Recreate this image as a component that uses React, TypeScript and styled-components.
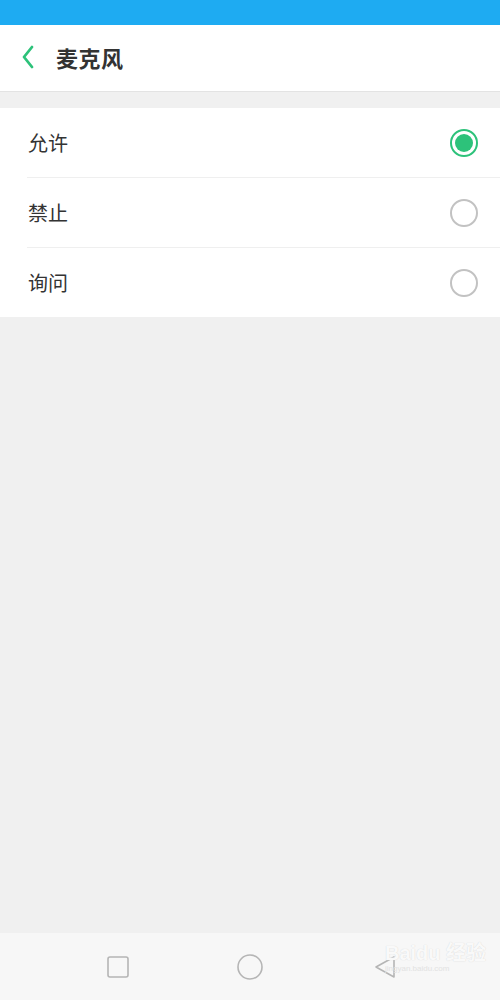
import styled, { createGlobalStyle } from "styled-components"

const GlobalStyle = createGlobalStyle`
  html, body {
    margin: 0;
    padding: 0;
    background: #f0f0f0;
  }
  * {
    box-sizing: border-box;
  }
`

const options = [
  { label: "允许", checked: true },
  { label: "禁止", checked: false },
  { label: "询问", checked: false },
]

export default function App() {
  return (
    <>
      <GlobalStyle />
      <Page>
        <StatusBar />
        <Header>
          <BackButton>
            <svg width="14" height="24" viewBox="0 0 14 24">
              <path
                d="M11 2 L3 12 L11 22"
                fill="none"
                stroke="#2dc27a"
                strokeWidth="2.8"
                strokeLinecap="round"
                strokeLinejoin="round"
              />
            </svg>
          </BackButton>
          <Title>麦克风</Title>
        </Header>
        <List>
          {options.map((option, i) => (
            <Row key={option.label} $last={i === options.length - 1}>
              <Label>{option.label}</Label>
              <Radio $checked={option.checked} />
            </Row>
          ))}
        </List>
        <Spacer />
        <NavBar>
          <NavSlot $width={132}>
            <svg width="22" height="22" viewBox="0 0 22 22">
              <rect x="1" y="1" width="20" height="20" rx="2" fill="none" stroke="#b5b5b5" strokeWidth="1.6" />
            </svg>
          </NavSlot>
          <NavSlot $width={132}>
            <svg width="26" height="26" viewBox="0 0 26 26">
              <circle cx="13" cy="13" r="12" fill="none" stroke="#b5b5b5" strokeWidth="1.6" />
            </svg>
          </NavSlot>
          <NavSlot $width={138}>
            <svg width="24" height="24" viewBox="0 0 24 24">
              <path
                d="M3 12 L21 2 L21 22 Z"
                fill="none"
                stroke="#b5b5b5"
                strokeWidth="1.6"
                strokeLinejoin="round"
              />
            </svg>
            <Watermark>
              Baidu 经验
              <small>jingyan.baidu.com</small>
            </Watermark>
          </NavSlot>
        </NavBar>
      </Page>
    </>
  )
}

const Page = styled.div`
  display: flex;
  flex-direction: column;
  width: 500px;
  height: 1000px;
  background: #f0f0f0;
  font-family: "Noto Sans CJK SC", "Noto Sans", sans-serif;
`

const StatusBar = styled.div`
  height: 25px;
  background: #1eabf2;
`

const Header = styled.div`
  display: flex;
  align-items: center;
  height: 67px;
  padding: 0 0 2px 21px;
  background: #ffffff;
  border-bottom: 1px solid #e3e3e3;
`

const BackButton = styled.div`
  display: flex;
  align-items: center;
  width: 35px;
`

const Title = styled.div`
  font-size: 22px;
  font-weight: 700;
  color: #333333;
  letter-spacing: 0.5px;
`

const List = styled.div`
  margin-top: 16px;
  background: #ffffff;
  padding-left: 27px;
`

const Row = styled.div<{ $last: boolean }>`
  display: flex;
  align-items: center;
  justify-content: space-between;
  height: ${({ $last }) => ($last ? "69px" : "70px")};
  padding-right: 22px;
  border-bottom: ${({ $last }) => ($last ? "none" : "1px solid #efefef")};
`

const Label = styled.div`
  font-size: 20px;
  color: #333333;
  padding-left: 1px;
`

const Radio = styled.div<{ $checked: boolean }>`
  width: 28px;
  height: 28px;
  border-radius: 50%;
  border: 2px solid ${({ $checked }) => ($checked ? "#2dc27a" : "#c2c2c2")};
  padding: 3px;
  background-clip: content-box;
  background-color: ${({ $checked }) => ($checked ? "#2dc27a" : "transparent")};
`

const Spacer = styled.div`
  flex: 1;
`

const NavBar = styled.div`
  display: flex;
  align-items: center;
  height: 67px;
  padding-left: 52px;
  background: #f7f7f7;
`

const NavSlot = styled.div<{ $width: number }>`
  position: relative;
  display: flex;
  align-items: center;
  justify-content: center;
  width: ${({ $width }) => $width}px;
  height: 100%;
`

const Watermark = styled.div`
  position: absolute;
  left: 69px;
  top: 10px;
  display: flex;
  flex-direction: column;
  font-family: "Liberation Sans", "Noto Sans CJK SC", sans-serif;
  font-size: 20px;
  font-weight: 700;
  color: rgba(255, 255, 255, 0.9);
  text-shadow: 0 0 1px #cfcfcf;
  white-space: nowrap;
  line-height: 20px;

  small {
    font-size: 8px;
    font-weight: 400;
    line-height: 12px;
    color: #e2e2e2;
    text-shadow: none;
  }
`
